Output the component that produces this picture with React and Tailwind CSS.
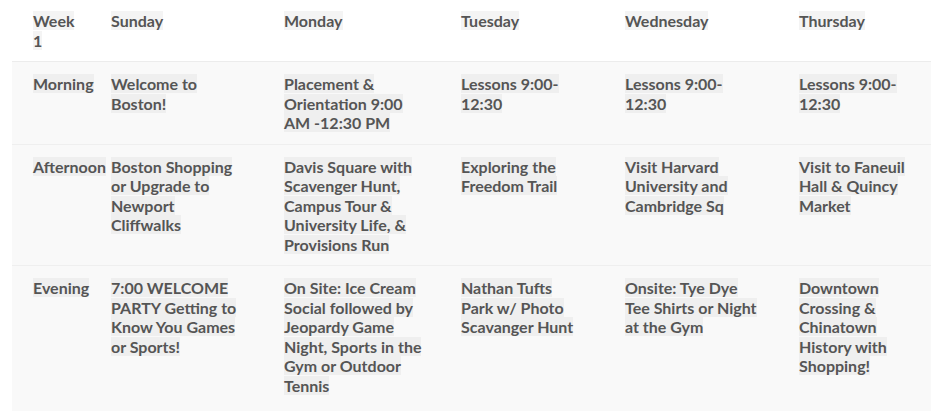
import React from "react";

const header = [["Week", "1"], ["Sunday"], ["Monday"], ["Tuesday"], ["Wednesday"], ["Thursday"]];

const rows = [
  [
    ["Morning"],
    ["Welcome to", "Boston!"],
    ["Placement &", "Orientation 9:00", "AM -12:30 PM"],
    ["Lessons 9:00-", "12:30"],
    ["Lessons 9:00-", "12:30"],
    ["Lessons 9:00-", "12:30"],
  ],
  [
    ["Afternoon"],
    ["Boston Shopping", "or Upgrade to", "Newport", "Cliffwalks"],
    ["Davis Square with", "Scavenger Hunt,", "Campus Tour &", "University Life, &", "Provisions Run"],
    ["Exploring the", "Freedom Trail"],
    ["Visit Harvard", "University and", "Cambridge Sq"],
    ["Visit to Faneuil", "Hall & Quincy", "Market"],
  ],
  [
    ["Evening"],
    ["7:00 WELCOME", "PARTY Getting to", "Know You Games", "or Sports!"],
    ["On Site: Ice Cream", "Social followed by", "Jeopardy Game", "Night, Sports in the", "Gym or Outdoor", "Tennis"],
    ["Nathan Tufts", "Park w/ Photo", "Scavanger Hunt"],
    ["Onsite: Tye Dye", "Tee Shirts or Night", "at the Gym"],
    ["Downtown", "Crossing &", "Chinatown", "History with", "Shopping!"],
  ],
];

const colWidths = ["w-[97px]", "w-[173px]", "w-[177px]", "w-[164px]", "w-[174px]", "w-[134px]"];

function Lines({ lines, hl }) {
  return (
    <span className={`${hl} [box-decoration-break:clone]`}>
      {lines.map((l, i) => (
        <React.Fragment key={i}>
          {l}
          {i < lines.length - 1 && <br />}
        </React.Fragment>
      ))}
    </span>
  );
}

export default function App() {
  return (
    <div className="w-[931px] h-[411px] overflow-hidden bg-white" style={{ fontFamily: "Lato, 'Open Sans', sans-serif" }}>
      <table className="ml-[12px] w-[919px] table-fixed border-collapse text-[16px] leading-[19.5px] font-bold text-[#555]">
        <colgroup>
          {colWidths.map((w, i) => (
            <col key={i} className={w} />
          ))}
        </colgroup>
        <thead>
          <tr className="border-b border-[#ececec]">
            {header.map((h, i) => (
              <th
                key={i}
                className={`text-left align-top font-bold pt-[11px] pb-[11px] ${i === 0 ? "pl-[21px] pr-[2px]" : "pl-[2px] pr-[2px]"}`}
              >
                <Lines lines={h} hl="bg-[#f4f4f4]" />
              </th>
            ))}
          </tr>
        </thead>
        <tbody>
          {rows.map((r, ri) => (
            <tr key={ri} className={`bg-[#f9f9f9] ${ri > 0 ? "border-t border-[#efefef]" : ""}`}>
              {r.map((c, ci) => (
                <td
                  key={ci}
                  className={`align-top pt-[12px] ${ri === 2 ? "pb-[24px]" : "pb-[11px]"} ${ci === 0 ? "pl-[21px] pr-0" : "pl-[2px] pr-[2px]"}`}
                >
                  <Lines lines={c} hl="bg-[#efefef]" />
                </td>
              ))}
            </tr>
          ))}
        </tbody>
      </table>
    </div>
  );
}
